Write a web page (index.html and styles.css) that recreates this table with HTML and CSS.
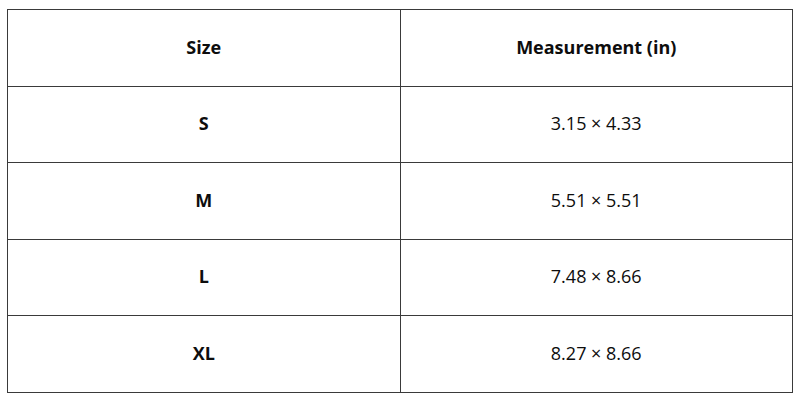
FILE: index.html
```html
<!DOCTYPE html>
<html>
<head>
<meta charset="utf-8">
<link rel="stylesheet" href="styles.css">
</head>
<body>
<table class="size-table">
  <thead>
    <tr><th>Size</th><th>Measurement (in)</th></tr>
  </thead>
  <tbody>
    <tr><th>S</th><td>3.15 × 4.33</td></tr>
    <tr><th>M</th><td>5.51 × 5.51</td></tr>
    <tr><th>L</th><td>7.48 × 8.66</td></tr>
    <tr><th>XL</th><td>8.27 × 8.66</td></tr>
  </tbody>
</table>
</body>
</html>
```
FILE: styles.css
```css
html, body {
  margin: 0;
  padding: 0;
  background: #fff;
}
body {
  font-family: "Open Sans", "Liberation Sans", sans-serif;
  color: #0d0d0d;
}
.size-table {
  margin: 9px 0 0 7px;
  width: 786px;
  border-collapse: collapse;
  table-layout: fixed;
}
.size-table th,
.size-table td {
  border: 1px solid #3a3a3a;
  height: 73.5px;
  padding: 0 0 2px;
  text-align: center;
  vertical-align: middle;
  font-size: 18px;
}
.size-table th {
  font-weight: 700;
}
.size-table td {
  font-weight: 400;
}
```
